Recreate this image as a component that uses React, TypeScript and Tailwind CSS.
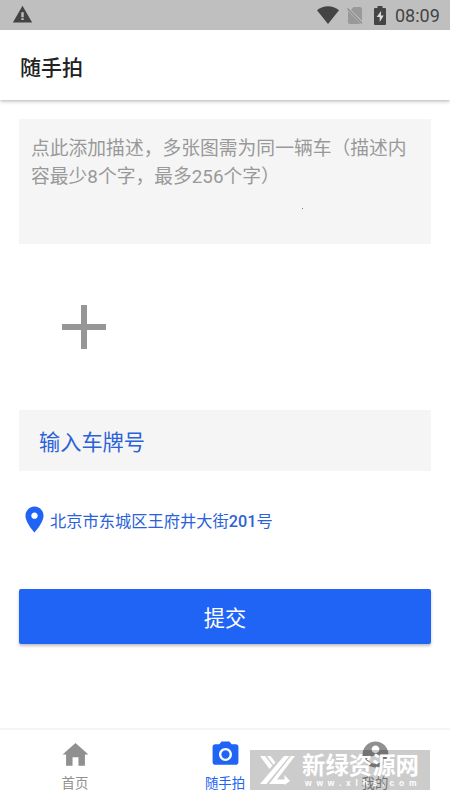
import React from "react";

const FONT = "font-[Roboto,'Noto_Sans_CJK_SC',sans-serif]";

function Icon({ d, className }: { d: string; className: string }) {
  return (
    <svg viewBox="0 0 24 24" fill="currentColor" className={`block shrink-0 ${className}`}>
      <path d={d} />
    </svg>
  );
}

function StatusBar() {
  return (
    <div className="z-10 flex h-[30px] shrink-0 items-center bg-[#bfbfbf] pr-[10px] pl-[12px] text-[#444]">
      <Icon className="mb-[2px] size-[21px]" d="M1 21h22L12 2 1 21zm12.4-2.6h-2.8v-2.2h2.8v2.2zm0-3.4h-2.8V9.5h2.8V15z" />
      <div className="ml-auto flex items-center">
        <svg viewBox="0 0 22 18" className="block h-[18px] w-[22px]" fill="currentColor">
          <path d="M0 4.3C6.6-1 15.4-1 22 4.3L11 18Z" />
        </svg>
        <svg viewBox="0 0 16 19" className="ml-[8px] block h-[19px] w-[16px]">
          <path d="M1 5 13 17q-.3 1-1 1H3q-2 0-2-2ZM4 3.8 6.5 1H13q2 0 2 2v12Z" fill="#999" />
          <path d="M.5 2.5 15 17.5" stroke="#8c8c8c" strokeWidth="1.3" />
        </svg>
        <svg viewBox="0 0 12 19" className="ml-[11px] block h-[19px] w-[12px]">
          <path d="M3.5 0h5v2H11q1 0 1 1v15q0 1-1 1H1q-1 0-1-1V3q0-1 1-1h2.5Z" fill="#444" />
          <path d="M7.2 4.7 2.7 11h3v5l4-6.6H6.8Z" fill="#ddd" />
        </svg>
        <span className="mt-[2px] ml-[9px] w-[45px] text-[18px] leading-[28px] whitespace-nowrap">08:09</span>
      </div>
    </div>
  );
}

function Tab({ d, label, active }: { d: string; label: string; active?: boolean }) {
  return (
    <div className={`flex flex-1 flex-col items-center pt-[9px] ${active ? "text-[#2064f6]" : "text-[#909090]"}`}>
      <Icon className="size-[31px]" d={d} />
      <span className="mt-[4px] text-[13.4px] leading-[20px]">{label}</span>
    </div>
  );
}

function Watermark() {
  return (
    <div className="absolute top-[20px] left-[250px] flex h-[40px] w-[180px] items-center bg-black/20 text-white">
      <svg viewBox="0 0 36 31" className="ml-[10px] block h-[31px] w-[36px] shrink-0" fill="#fff">
        <path d="M0 1h5l7.5 9.5-3 3.5Z" />
        <path d="M7 1h3.5l5 6.5-2 2.3Z" />
        <path d="M24 1h5.5L6.5 29H0Z" />
        <path d="M31 1h4L17 24.5h7.5V20l5.5 6-5.5 4v-1H9Z" />
      </svg>
      <div className="ml-[6px] flex flex-col">
        <span className="mt-[3px] h-[24px] text-[23.4px] leading-[24px] font-bold whitespace-nowrap">新绿资源网</span>
        <span className="ml-[3px] h-[11px] font-['Liberation_Sans',sans-serif] text-[8.5px] leading-[11px] font-bold tracking-[4.8px] whitespace-nowrap">
          www.xlhs.com
        </span>
      </div>
    </div>
  );
}

export default function App() {
  return (
    <div className={`flex h-[800px] w-[450px] flex-col overflow-hidden bg-white ${FONT}`}>
      <StatusBar />
      <header className="flex h-[70px] items-center pt-[6px] pl-[20px] shadow-[0_1px_4px_rgba(0,0,0,0.32)]">
        <h1 className="text-[21px] leading-[30px] font-medium text-[#222]">随手拍</h1>
      </header>

      <main className="flex flex-1 flex-col px-[19px] pt-[19px]">
        <div className="relative h-[125px] bg-[#f5f5f5] pt-[16px] pl-[12px] text-[18.8px] leading-[28px] text-[#999]">
          <p className="whitespace-nowrap">
            点此添加描述，多张图需为同一辆车（描述内
            <br />
            容最少8个字，最多256个字）
          </p>
          <i className="absolute top-[89px] left-[283px] size-px bg-[#40a030]" />
        </div>

        <svg viewBox="0 0 44 44" className="mt-[61px] ml-[42.5px] block size-[44px]">
          <path d="M0 22h44M22 0v44" stroke="#969696" strokeWidth="6" />
        </svg>

        <div className="mt-[61px] flex h-[61px] items-center bg-[#f5f5f5] pt-[5px] pl-[20px] text-[21.2px] text-[#2b62d9]">
          输入车牌号
        </div>

        <div className="mt-[33px] flex h-[31px] items-center text-[#2064f6]">
          <Icon
            className="size-[31px]"
            d="M12 2C8.13 2 5 5.13 5 9c0 5.25 7 13 7 13s7-7.75 7-13c0-3.87-3.13-7-7-7zm0 9.5c-1.38 0-2.5-1.12-2.5-2.5s1.12-2.5 2.5-2.5 2.5 1.12 2.5 2.5-1.12 2.5-2.5 2.5z"
          />
          <span className="mt-[5px] text-[16.25px] leading-[24px] whitespace-nowrap text-[#2b62d9]">
            北京市东城区王府井大街<span className="font-medium">201</span>号
          </span>
        </div>

        <button className="mt-[54px] h-[55px] shrink-0 rounded-[2px] bg-[#2064f6] pt-[5px] text-[21.2px] text-white shadow-[0_2px_3px_rgba(0,0,0,0.25)]">
          提交
        </button>
      </main>

      <nav className="relative flex h-[72px] shrink-0 border-t-2 border-[#f5f5f5]">
        <Tab label="首页" d="M9.7 20.7v-6.5h4.6v6.5h5V12H22L12 3 2 12h2.7v8.7z" />
        <Tab
          active
          label="随手拍"
          d="M9 2 7.17 4H4c-1.1 0-2 .9-2 2v12c0 1.1.9 2 2 2h16c1.1 0 2-.9 2-2V6c0-1.1-.9-2-2-2h-3.17L15 2H9zm3 15c-2.76 0-5-2.24-5-5s2.24-5 5-5 5 2.24 5 5-2.24 5-5 5zM12 8.8a3.2 3.2 0 1 0 0 6.4 3.2 3.2 0 0 0 0-6.4z"
        />
        <Tab
          label="我的"
          d="M12 2C6.48 2 2 6.48 2 12s4.48 10 10 10 10-4.48 10-10S17.52 2 12 2zm0 3c1.66 0 3 1.34 3 3s-1.34 3-3 3-3-1.34-3-3 1.34-3 3-3zm0 14.2c-2.5 0-4.71-1.28-6-3.22.03-1.99 4-3.08 6-3.08 1.99 0 5.97 1.09 6 3.08-1.29 1.94-3.5 3.22-6 3.22z"
        />
        <Watermark />
      </nav>
    </div>
  );
}
